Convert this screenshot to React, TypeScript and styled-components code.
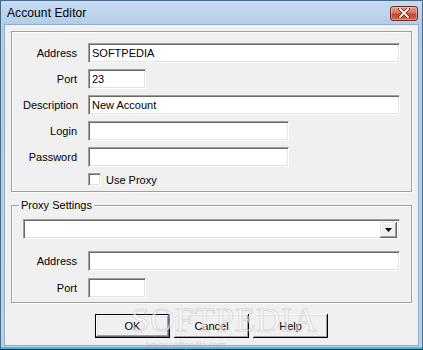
import React from 'react';
import styled, { createGlobalStyle } from 'styled-components';

const GlobalStyle = createGlobalStyle`
  html, body {
    margin: 0;
    padding: 0;
    background: #ffffff;
  }
  * {
    box-sizing: border-box;
  }
`;

const FONT = `'Liberation Sans', Arial, sans-serif`;

const Window = styled.div`
  position: relative;
  width: 423px;
  height: 350px;
  display: flex;
  flex-direction: column;
  border: 1px solid #4a6a8c;
  border-bottom-color: #101820;
  background:
    linear-gradient(to top, #2fc2ee 0, #2fc2ee 2px, transparent 2px),
    linear-gradient(to bottom, #c6dbf1 0, #b4cde8 24px, #bad3ec 100%);
  font-family: ${FONT};
  font-size: 11px;
  color: #000;
`;

const TitleBar = styled.div`
  height: 23px;
  display: flex;
  align-items: center;
  justify-content: space-between;
  padding: 0 4px 0 6px;
`;

const Title = styled.span`
  font-size: 12px;
  color: #000;
  letter-spacing: 0.1px;
`;

const CloseButton = styled.div`
  width: 28px;
  height: 15px;
  margin-top: 1px;
  border: 1px solid #6b2b22;
  border-radius: 3px;
  background: linear-gradient(to bottom, #e4a08e 0%, #d27560 45%, #c2452c 55%, #d06a4e 100%);
  display: flex;
  align-items: center;
  justify-content: center;
  box-shadow: inset 0 0 0 1px rgba(255, 255, 255, 0.35);
`;

const Client = styled.div`
  flex: 1;
  margin: 0 3px 3px 3px;
  border: 1px solid #93adc9;
  background: #f0f0f0;
  padding: 6px 6px 0 6px;
  display: flex;
  flex-direction: column;
  position: relative;
`;

const Group = styled.div<{ $top?: number }>`
  position: relative;
  border: 1px solid #a0a0a0;
  box-shadow: 1px 1px 0 #fff, inset 1px 1px 0 #fff;
  margin-top: ${(p) => p.$top ?? 0}px;
  display: flex;
  flex-direction: column;
`;

const FieldGrid = styled.div<{ $pad: string; $gap: number }>`
  display: grid;
  grid-template-columns: 65px 1fr;
  row-gap: ${(p) => p.$gap}px;
  padding: ${(p) => p.$pad};
  align-items: center;
`;

const Legend = styled.span`
  position: absolute;
  top: -8px;
  left: 7px;
  padding: 0 2px;
  background: #f0f0f0;
  line-height: 14px;
`;

const Label = styled.span`
  text-align: right;
  padding-right: 11px;
  white-space: nowrap;
  line-height: 20px;
`;

const TextBox = styled.div<{ $width?: number }>`
  height: 20px;
  width: ${(p) => (p.$width ? `${p.$width}px` : '100%')};
  background: #fff;
  border: 1px solid;
  border-color: #a0a0a0 #fff #fff #a0a0a0;
  box-shadow: inset 1px 1px 0 #696969, inset -1px -1px 0 #e3e3e3;
  padding: 0 3px;
  display: flex;
  align-items: center;
  white-space: nowrap;
`;

const CheckRow = styled.label`
  grid-column: 2;
  display: flex;
  align-items: center;
  gap: 5px;
  height: 13px;
`;

const CheckBox = styled.span`
  width: 13px;
  height: 13px;
  background: #fff;
  border: 1px solid;
  border-color: #a0a0a0 #fff #fff #a0a0a0;
  box-shadow: inset 1px 1px 0 #696969, inset -1px -1px 0 #e3e3e3;
`;

const Combo = styled.div`
  margin: 13px 11px 0 11px;
  height: 20px;
  background: #fff;
  border: 1px solid;
  border-color: #a0a0a0 #fff #fff #a0a0a0;
  box-shadow: inset 1px 1px 0 #696969, inset -1px -1px 0 #e3e3e3;
  display: flex;
  justify-content: flex-end;
  padding: 1px 1px 1px 0;
`;

const ComboButton = styled.div`
  width: 17px;
  height: 16px;
  margin: 1px 1px 0 0;
  background: #f0f0f0;
  box-shadow: inset -1px -1px 0 #696969, inset 1px 1px 0 #e3e3e3, inset -2px -2px 0 #a0a0a0, inset 2px 2px 0 #fff;
  display: flex;
  align-items: center;
  justify-content: center;
`;

const ButtonRow = styled.div`
  display: flex;
  justify-content: center;
  gap: 4px;
  margin-top: 11px;
`;

const Button = styled.div<{ $default?: boolean }>`
  width: 75px;
  height: 24px;
  display: flex;
  align-items: center;
  justify-content: center;
  background: #f0f0f0;
  border: ${(p) => (p.$default ? '1px solid #000' : 'none')};
  box-shadow: inset -1px -1px 0 ${(p) => (p.$default ? '#696969' : '#000')}, inset 1px 1px 0 #fff,
    inset -2px -2px 0 #a0a0a0, inset 2px 2px 0 #e3e3e3;
`;

const Watermark = styled.div`
  position: absolute;
  left: 126px;
  top: 277px;
  font-family: 'Liberation Serif', 'Times New Roman', serif;
  font-size: 33px;
  letter-spacing: 1px;
  color: rgba(255, 255, 255, 0.6);
  -webkit-text-stroke: 1px rgba(150, 150, 150, 0.3);
  pointer-events: none;
`;

const WatermarkUrl = styled.div`
  position: absolute;
  left: 141px;
  top: 314px;
  font-family: 'Liberation Serif', serif;
  font-size: 10px;
  color: rgba(170, 170, 170, 0.5);
  pointer-events: none;
`;

const CloseIcon = () => (
  <svg width="12" height="10" viewBox="0 0 12 10">
    <path d="M2 1 L10 9 M10 1 L2 9" stroke="#5a1a10" strokeWidth="3.2" strokeLinecap="square" />
    <path d="M2 1 L10 9 M10 1 L2 9" stroke="#fff" strokeWidth="1.8" strokeLinecap="square" />
  </svg>
);

const ArrowDown = () => (
  <svg width="7" height="4" viewBox="0 0 7 4">
    <path d="M0 0 H7 L3.5 4 Z" fill="#000" />
  </svg>
);

export default function App() {
  return (
    <>
      <GlobalStyle />
      <Window>
        <TitleBar>
          <Title>Account Editor</Title>
          <CloseButton>
            <CloseIcon />
          </CloseButton>
        </TitleBar>
        <Client>
          <Group>
            <FieldGrid $pad="11px 11px 5px 11px" $gap={6}>
              <Label>Address</Label>
              <TextBox>SOFTPEDIA</TextBox>
              <Label>Port</Label>
              <TextBox $width={58}>23</TextBox>
              <Label>Description</Label>
              <TextBox>New Account</TextBox>
              <Label>Login</Label>
              <TextBox $width={201} />
              <Label>Password</Label>
              <TextBox $width={201} />
              <CheckRow>
                <CheckBox />
                <span>Use Proxy</span>
              </CheckRow>
            </FieldGrid>
          </Group>
          <Group $top={13}>
            <Legend>Proxy Settings</Legend>
            <Combo>
              <ComboButton>
                <ArrowDown />
              </ComboButton>
            </Combo>
            <FieldGrid $pad="12px 11px 4px 11px" $gap={7}>
              <Label>Address</Label>
              <TextBox />
              <Label>Port</Label>
              <TextBox $width={58} />
            </FieldGrid>
          </Group>
          <ButtonRow>
            <Button $default>OK</Button>
            <Button>Cancel</Button>
            <Button>Help</Button>
          </ButtonRow>
          <Watermark>SOFTPEDIA</Watermark>
          <WatermarkUrl>www.softpedia.com</WatermarkUrl>
        </Client>
      </Window>
    </>
  );
}
